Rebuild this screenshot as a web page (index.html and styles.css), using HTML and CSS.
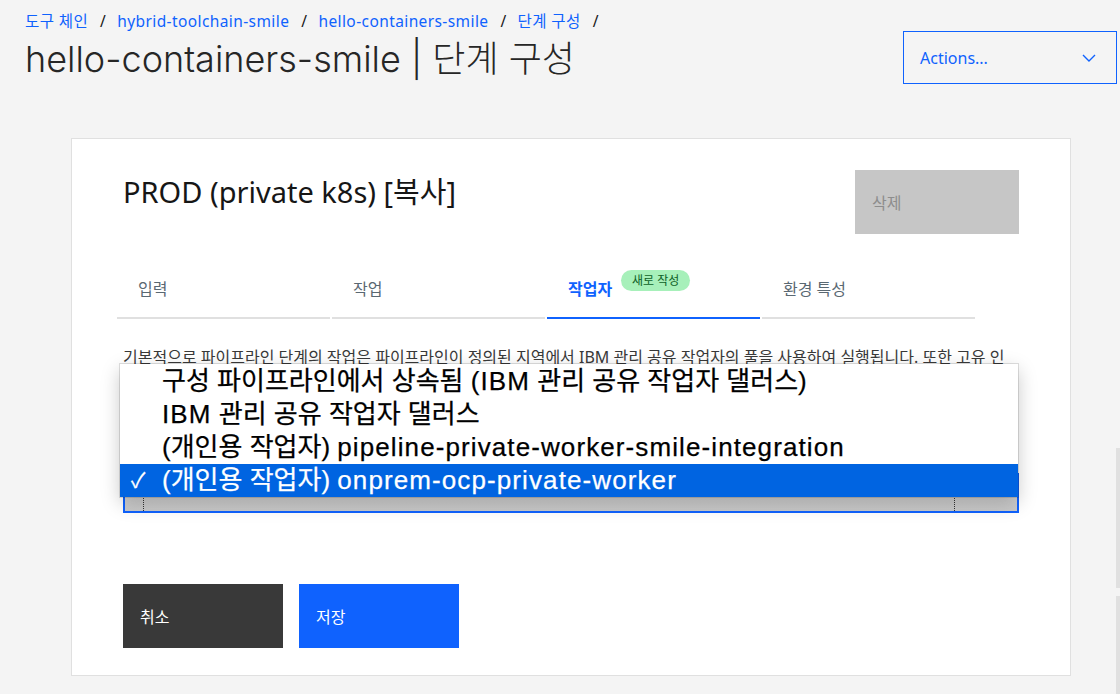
FILE: index.html
```html
<!DOCTYPE html>
<html lang="ko">
<head>
<meta charset="utf-8">
<title>단계 구성</title>
<link rel="stylesheet" href="styles.css">
</head>
<body>
<header class="page-header">
  <div class="header-text">
    <nav class="breadcrumb">
      <a class="crumb">도구 체인</a><span class="sep">/</span>
      <a class="crumb">hybrid-toolchain-smile</a><span class="sep">/</span>
      <a class="crumb">hello-containers-smile</a><span class="sep">/</span>
      <a class="crumb">단계 구성</a><span class="sep">/</span>
    </nav>
    <h1 class="page-title">hello-containers-smile | 단계 구성</h1>
  </div>
  <button class="actions-btn">
    <span>Actions...</span>
    <svg class="chevron" width="14" height="8" viewBox="0 0 14 8"><path d="M1 1l6 6 6-6" fill="none" stroke="#0f62fe" stroke-width="1.4"/></svg>
  </button>
</header>

<main class="card">
  <div class="card-head">
    <h2 class="stage-name">PROD (private k8s) [복사]</h2>
    <button class="btn btn-delete">삭제</button>
  </div>

  <div class="tabs">
    <div class="tab">입력</div>
    <div class="tab">작업</div>
    <div class="tab tab-active">작업자<span class="badge">새로 작성</span></div>
    <div class="tab">환경 특성</div>
  </div>

  <p class="desc">기본적으로 파이프라인 단계의 작업은 파이프라인이 정의된 지역에서 IBM 관리 공유 작업자의 풀을 사용하여 실행됩니다. 또한 고유 인프라에서 실행되는 개인용 작업자를 사용하도록 단계를 구성할 수 있습니다.</p>

  <div class="field">
    <div class="select-box">
      <span class="dots dots-left"></span>
      <span class="dots dots-right"></span>
    </div>
    <ul class="popup">
      <li class="option">구성 파이프라인에서 상속됨 <span class="latin">(IBM</span> 관리 공유 작업자 댈러스)</li>
      <li class="option"><span class="latin">IBM</span> 관리 공유 작업자 댈러스</li>
      <li class="option">(개인용 작업자) <span class="latin">pipeline-private-worker-smile-integration</span></li>
      <li class="option option-selected"><span class="check">✓</span>(개인용 작업자) <span class="latin">onprem-ocp-private-worker</span></li>
    </ul>
  </div>

  <div class="button-row">
    <button class="btn btn-cancel">취소</button>
    <button class="btn btn-save">저장</button>
  </div>
</main>
<div class="scroll-track scroll-a"></div>
<div class="scroll-track scroll-b"></div>
</body>
</html>
```

FILE: styles.css
```css
* { box-sizing: border-box; }

html, body {
  margin: 0;
  padding: 0;
}

body {
  background: #f4f4f4;
  font-family: "Noto Sans", "Noto Sans CJK KR", sans-serif;
  color: #161616;
  width: 1120px;
  height: 694px;
  overflow: hidden;
}

.page-header {
  display: flex;
  justify-content: space-between;
  align-items: flex-start;
  padding: 11px 3px 0 25px;
}

.breadcrumb {
  display: flex;
  align-items: center;
  font-size: 15.5px;
  letter-spacing: 0.4px;
  line-height: 20px;
  color: #0f62fe;
}

.crumb { color: #0f62fe; }

.sep {
  color: #161616;
  margin: 0 11px 0 12px;
}

.page-title {
  margin: 6px 0 0;
  font-family: "Inter", "Noto Sans CJK KR", sans-serif;
  font-size: 36px;
  line-height: 44px;
  font-weight: 300;
  color: #262626;
}

.actions-btn {
  margin-top: 20px;
  width: 214px;
  height: 53px;
  border: 1px solid #0f62fe;
  background: transparent;
  color: #0f62fe;
  font-family: inherit;
  font-size: 16px;
  display: flex;
  align-items: center;
  justify-content: space-between;
  padding: 0 20px 0 16px;
}

.card {
  margin: 54px 0 0 71px;
  width: 1000px;
  background: #ffffff;
  border: 1px solid #e0e0e0;
  padding: 31px 51px 27px 51px;
}

.card-head {
  display: flex;
  justify-content: space-between;
  align-items: flex-start;
}

.stage-name {
  margin: 0;
  font-size: 29px;
  line-height: 44px;
  font-weight: 400;
  color: #161616;
}

.btn {
  width: 164px;
  height: 64px;
  border: 0;
  font-family: inherit;
  font-size: 16px;
  text-align: left;
  padding: 0 17px;
  color: #ffffff;
}

.btn-delete {
  background: #c6c6c6;
  color: #8d8d8d;
}

.tabs {
  display: flex;
  gap: 2px;
  margin: 37px 0 0 -6px;
}

.tab {
  position: relative;
  width: 213px;
  padding: 8px 21px 18px;
  font-size: 16px;
  line-height: 20px;
  color: #5a6872;
  border-bottom: 2px solid #e0e0e0;
}

.tab-active {
  color: #0f62fe;
  font-weight: 600;
  border-bottom-color: #0f62fe;
}

.badge {
  position: absolute;
  left: 74px;
  top: -1px;
  height: 21px;
  padding: 0 11px;
  border-radius: 11px;
  background: #a7f0ba;
  color: #0e6027;
  font-size: 12px;
  line-height: 21px;
  font-weight: 400;
  white-space: nowrap;
}

.desc {
  margin: 28px 0 0;
  height: 40px;
  overflow: hidden;
  font-size: 16px;
  line-height: 20px;
  color: #393939;
}

.field {
  position: relative;
  margin-top: 86px;
}

.select-box {
  position: relative;
  height: 40px;
  border: 2px solid #0f62fe;
  background: linear-gradient(#dedede, #c9c9c9);
}

.dots {
  position: absolute;
  top: 0;
  bottom: 0;
  border-left: 1px dotted #333333;
}

.dots-left { left: 18px; }
.dots-right { right: 62px; }

.popup {
  position: absolute;
  left: -3px;
  right: 1px;
  bottom: 16px;
  margin: 0;
  padding: 1px 0 0;
  list-style: none;
  background: #ffffff;
  box-shadow: 0 6px 18px rgba(0, 0, 0, 0.22), 0 0 0 1px rgba(0, 0, 0, 0.12);
}

.option {
  position: relative;
  height: 33px;
  padding-left: 42px;
  font-family: "Liberation Sans", "Noto Sans CJK KR", sans-serif;
  font-size: 26px;
  line-height: 33px;
  color: #000000;
  -webkit-text-stroke: 0.25px currentColor;
  white-space: nowrap;
}

.latin {
  letter-spacing: 1.1px;
}

.option-selected {
  background: #0064e1;
  color: #ffffff;
}

.check {
  position: absolute;
  left: 11px;
  top: 0;
  font-size: 21px;
}

.button-row {
  display: flex;
  gap: 16px;
  margin-top: 71px;
}

.btn-cancel {
  width: 160px;
  background: #393939;
}

.btn-save {
  width: 160px;
  background: #0f62fe;
}

.scroll-track {
  position: fixed;
  right: 0;
  width: 4px;
  background: #e0e0e0;
}

.scroll-a { top: 448px; height: 140px; }
.scroll-b { top: 596px; height: 98px; }
```
